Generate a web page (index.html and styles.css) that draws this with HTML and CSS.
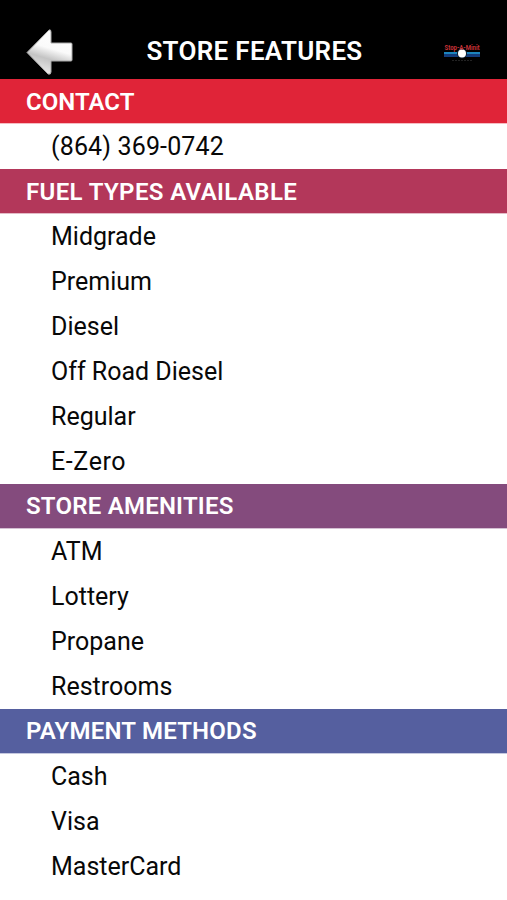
FILE: index.html
```html
<!DOCTYPE html>
<html lang="en">
<head>
<meta charset="utf-8">
<title>Store Features</title>
<link rel="stylesheet" href="styles.css">
</head>
<body>
<header class="bar">
  <svg class="back" viewBox="0 0 48 48" role="img" aria-label="Back">
    <defs><linearGradient id="steel" x1=".65" y1="0" x2=".35" y2="1"><stop offset="0" stop-color="#fff"/><stop offset=".42" stop-color="#fafafa"/><stop offset=".65" stop-color="#c4c4c4"/><stop offset="1" stop-color="#eee"/></linearGradient></defs>
    <path d="M1 24.500 23 2Q25 1 25 4V15H45Q46 15 46 16V32Q46 33 45 33H25V44Q25 47 22 46Z" fill="url(#steel)" stroke="#aaa" stroke-width="1"/>
  </svg>
  <h1>STORE FEATURES</h1>
  <svg class="logo" viewBox="0 0 38 24" role="img" aria-label="Stop-A-Minit">
    <rect x="1" y="12" width="36" height="2" fill="#1c84bd"/>
    <rect x="1" y="14" width="36" height="3" fill="#123c7c"/>
    <circle cx="19" cy="13.500" r="5" fill="#102030"/>
    <circle cx="19" cy="13.500" r="4" fill="#fff"/>
    <text x="1.500" y="10" textLength="35" lengthAdjust="spacingAndGlyphs">Stop-A-Minit</text>
    <path d="M9 20.500H29" stroke="#222" stroke-width="1" stroke-dasharray="2 1"/>
  </svg>
</header>
<main>
  <section><h2 class="contact">CONTACT</h2><ul><li class="phone">(864) 369-0742</li></ul></section>
  <section><h2 class="fuel">FUEL TYPES AVAILABLE</h2><ul><li>Midgrade</li><li>Premium</li><li>Diesel</li><li>Off Road Diesel</li><li>Regular</li><li class="ezero">E-Zero</li></ul></section>
  <section><h2 class="amenities">STORE AMENITIES</h2><ul><li>ATM</li><li>Lottery</li><li>Propane</li><li>Restrooms</li></ul></section>
  <section><h2 class="payment">PAYMENT METHODS</h2><ul><li>Cash</li><li>Visa</li><li>MasterCard</li></ul></section>
</main>
</body>
</html>
```
FILE: styles.css
```css
* { box-sizing: border-box; }
body { margin: 0; background: #fff; font-family: Roboto, sans-serif; color: #080808; }
.bar { height: 79px; padding: 24px 26px 0; background: #000; display: grid; grid-template-columns: 48px 1fr 38px; align-items: center; }
.back { width: 48px; height: 48px; }
.logo { width: 38px; height: 24px; margin-top: 1px; overflow: visible; }
.logo text { font: bold 7px Roboto, sans-serif; fill: #c83237; }
h1 { margin: -2px 8px 0 0; color: #fff; font-size: 26px; line-height: 30px; font-weight: 600; letter-spacing: .3px; text-align: center; white-space: nowrap; }
h2 { margin: 0; height: 45px; padding: 0 0 0 26px; color: #fff; font-size: 24px; line-height: 44px; font-weight: 600; border-bottom: 1px solid #ddd; }
.contact { padding-top: 1px; background: #e02438; border-color: #f6bcc2; }
.fuel { padding-top: 1px; background: #b3375a; border-color: #e3bcc7; letter-spacing: .37px; }
.amenities { background: #844b7d; border-color: #d5c0d3; letter-spacing: .22px; }
.payment { background: #555f9f; border-color: #c5c8df; letter-spacing: .22px; }
ul { margin: 0; padding: 0; list-style: none; }
li { height: 45px; padding-left: 51px; font-size: 25px; line-height: 45px; }
.phone { letter-spacing: .15px; }
.ezero { letter-spacing: .6px; }
```
